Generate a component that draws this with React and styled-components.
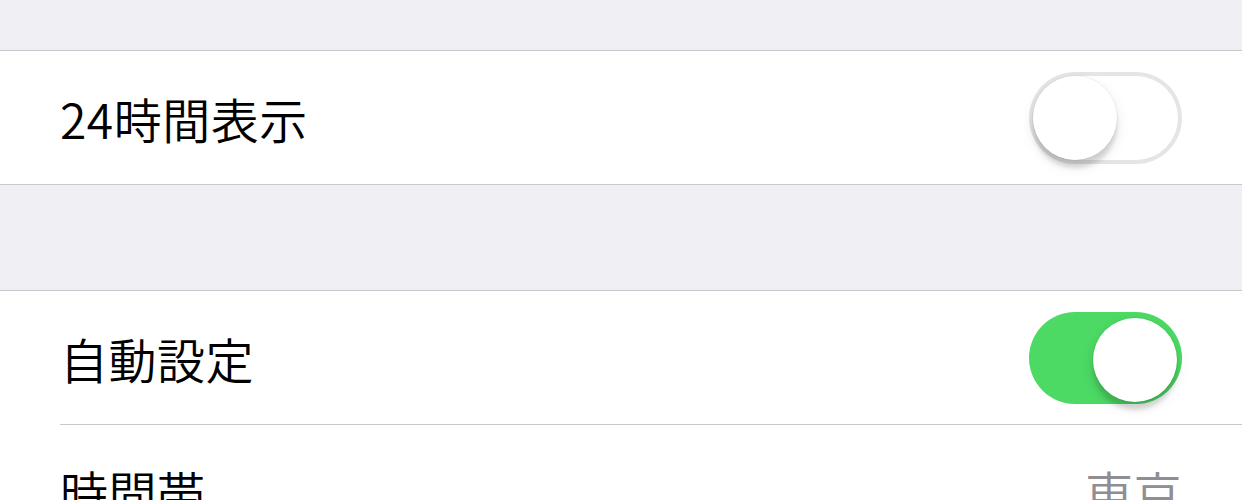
import React from "react";
import styled, { createGlobalStyle } from "styled-components";

const GlobalStyle = createGlobalStyle`
  html, body {
    margin: 0;
    padding: 0;
    background: #efeff4;
  }
  body {
    font-family: "Noto Sans CJK JP", "Noto Sans", sans-serif;
    -webkit-font-smoothing: antialiased;
  }
`;

export default function App() {
  return (
    <>
      <GlobalStyle />
      <Page>
        <SectionGap $h={50} />
        <Group>
          <Row>
            <Label>24時間表示</Label>
            <Switch $on={false} />
          </Row>
        </Group>
        <SectionGap $h={105} />
        <Group>
          <Row $divider>
            <Label>自動設定</Label>
            <Switch $on />
          </Row>
          <Row>
            <Label>時間帯</Label>
            <Detail>東京</Detail>
          </Row>
        </Group>
      </Page>
    </>
  );
}

function Switch({ $on }) {
  return (
    <SwitchTrack $on={$on}>
      <SwitchKnob $on={$on} />
    </SwitchTrack>
  );
}

const Page = styled.div`
  width: 1242px;
  height: 500px;
  overflow: hidden;
  background: #efeff4;
`;

const SectionGap = styled.div`
  height: ${(p) => p.$h}px;
`;

const Group = styled.div`
  background: #fff;
  border-top: 1px solid #c8c7cc;
  border-bottom: 1px solid #c8c7cc;
`;

const Row = styled.div`
  position: relative;
  height: 133px;
  display: flex;
  align-items: center;
  justify-content: space-between;
  padding: 0 60px 0 60px;
  box-sizing: border-box;

  &::after {
    content: "";
    display: ${(p) => (p.$divider ? "block" : "none")};
    position: absolute;
    left: 60px;
    right: 0;
    bottom: -1px;
    height: 1px;
    background: #c8c7cc;
  }
`;

const Label = styled.span`
  font-size: 48px;
  font-weight: 350;
  line-height: 1;
  color: #000;
  letter-spacing: 0.5px;
`;

const Detail = styled.span`
  font-size: 48px;
  font-weight: 350;
  line-height: 1;
  color: #8e8e93;
  letter-spacing: 0.5px;
`;

const SwitchTrack = styled.div`
  position: relative;
  width: 153px;
  height: 92px;
  border-radius: 46px;
  box-sizing: border-box;
  background: ${(p) => (p.$on ? "#4cd964" : "#fff")};
  box-shadow: ${(p) => (p.$on ? "none" : "inset 0 0 0 4px #e5e5e5")};
  flex-shrink: 0;
`;

const SwitchKnob = styled.div`
  position: absolute;
  top: ${(p) => (p.$on ? "6px" : "4px")};
  left: ${(p) => (p.$on ? "64px" : "4px")};
  width: 84px;
  height: 84px;
  border-radius: 50%;
  background: #fff;
  box-shadow: 0 8px 4px rgba(0, 0, 0, 0.12), 0 0 0 1px rgba(0, 0, 0, 0.04),
    0 6px 14px rgba(0, 0, 0, 0.1);
`;
